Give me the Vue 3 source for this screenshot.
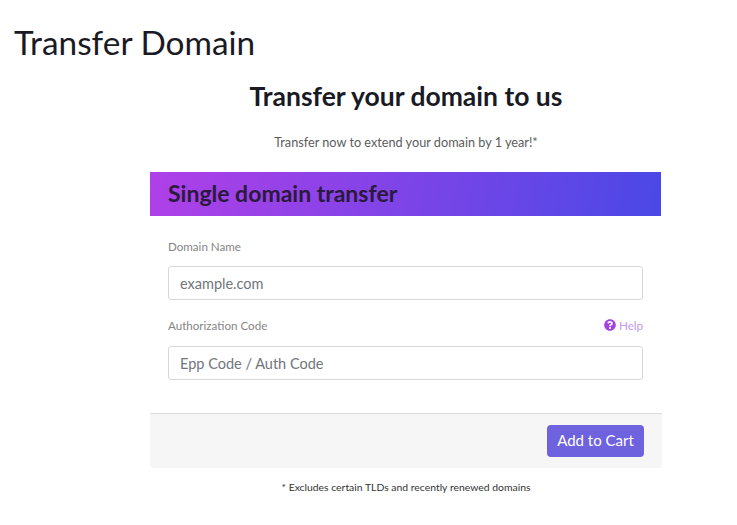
<template>
  <div class="page">
    <h1 class="page-title">Transfer Domain</h1>
    <div class="content">
      <h2 class="heading">Transfer your domain to us</h2>
      <p class="sub">Transfer now to extend your domain by 1 year!*</p>
      <div class="card">
        <div class="card-head">Single domain transfer</div>
        <div class="card-body">
          <div class="label-row"><label>Domain Name</label></div>
          <input class="field" type="text" placeholder="example.com" />
          <div class="label-row second">
            <label>Authorization Code</label>
            <a class="help">
              <svg viewBox="0 0 512 512" width="12" height="12"><path fill="#a240e4" d="M504 256c0 137-111 248-248 248S8 393 8 256 119 8 256 8s248 111 248 248zM262.700 90c-54.500 0-89.300 23-116.600 63.800-3.500 5.300-2.400 12.400 2.700 16.300l34.700 26.300c5.200 3.900 12.600 3 16.700-2.100 17.900-22.700 30.100-35.800 57.300-35.800 20.400 0 45.700 13.100 45.700 32.900 0 15-12.400 22.700-32.500 34C247.100 238.500 216 254.900 216 296v4c0 6.600 5.400 12 12 12h56c6.600 0 12-5.400 12-12v-1.300c0-28.500 83.200-29.700 83.200-106.700 0-58-60.200-102-116.500-102zM256 338c-25.400 0-46 20.600-46 46 0 25.400 20.600 46 46 46s46-20.600 46-46c0-25.400-20.600-46-46-46z"/></svg>
              Help
            </a>
          </div>
          <input class="field" type="text" placeholder="Epp Code / Auth Code" />
        </div>
        <div class="card-foot">
          <button class="add-btn">Add to Cart</button>
        </div>
      </div>
      <p class="note">* Excludes certain TLDs and recently renewed domains</p>
    </div>
  </div>
</template>

<script setup>
</script>

<style>
html, body {
  margin: 0;
  background: #fff;
}
</style>

<style scoped>
.page {
  width: 737px;
  height: 525px;
  overflow: hidden;
  box-sizing: border-box;
  font-family: "Lato", "Noto Sans", sans-serif;
  color: #1a1a24;
}
.page-title {
  margin: 0;
  padding: 23px 0 0 14px;
  font-size: 33.400px;
  line-height: 38px;
  font-weight: 400;
}
.content {
  width: 512px;
  margin-left: 150px;
}
.heading {
  margin: 18px 0 0;
  text-align: center;
  font-size: 26.500px;
  line-height: 34px;
  font-weight: 700;
}
.sub {
  margin: 20px 0 0;
  text-align: center;
  font-size: 12.700px;
  line-height: 18px;
  color: #5c5c5c;
}
.card {
  margin-top: 21px;
}
.card-head {
  width: 511px;
  height: 44px;
  box-sizing: border-box;
  padding-left: 18px;
  line-height: 43px;
  font-size: 23px;
  font-weight: 700;
  color: #2a1a3c;
  background: linear-gradient(100deg, #b040e8, #4a48e6);
}
.card-body {
  padding: 21px 19px 33px 18px;
}
.label-row {
  display: flex;
  justify-content: space-between;
  align-items: center;
  height: 18px;
  margin-bottom: 11px;
  font-size: 11.600px;
  color: #858585;
}
.label-row.second {
  margin-top: 16px;
  padding-bottom: 1px;
}
.help {
  display: flex;
  align-items: center;
  gap: 3px;
  color: #c09aec;
}
.field {
  display: block;
  width: 100%;
  height: 34px;
  box-sizing: border-box;
  padding: 0 11px;
  border: 1px solid #d8d8d8;
  border-radius: 3px;
  font-family: inherit;
  font-size: 14.500px;
  line-height: 30px;
  color: #555;
  outline: none;
}
.field::placeholder {
  color: #70767c;
  opacity: 1;
}
.card-foot {
  display: flex;
  justify-content: flex-end;
  height: 55px;
  box-sizing: border-box;
  padding: 11px 18px 0 0;
  background: #f6f6f6;
  border-top: 1px solid #dcdcdc;
  border-radius: 0 0 3px 3px;
}
.add-btn {
  width: 97px;
  height: 32px;
  padding: 0 0 2px;
  border: 0;
  border-radius: 4px;
  background: #6f62df;
  color: #fff;
  font-family: inherit;
  font-size: 15px;
}
.note {
  margin: 12px 0 0;
  text-align: center;
  font-size: 10.400px;
  line-height: 14px;
  color: #333;
}
</style>
